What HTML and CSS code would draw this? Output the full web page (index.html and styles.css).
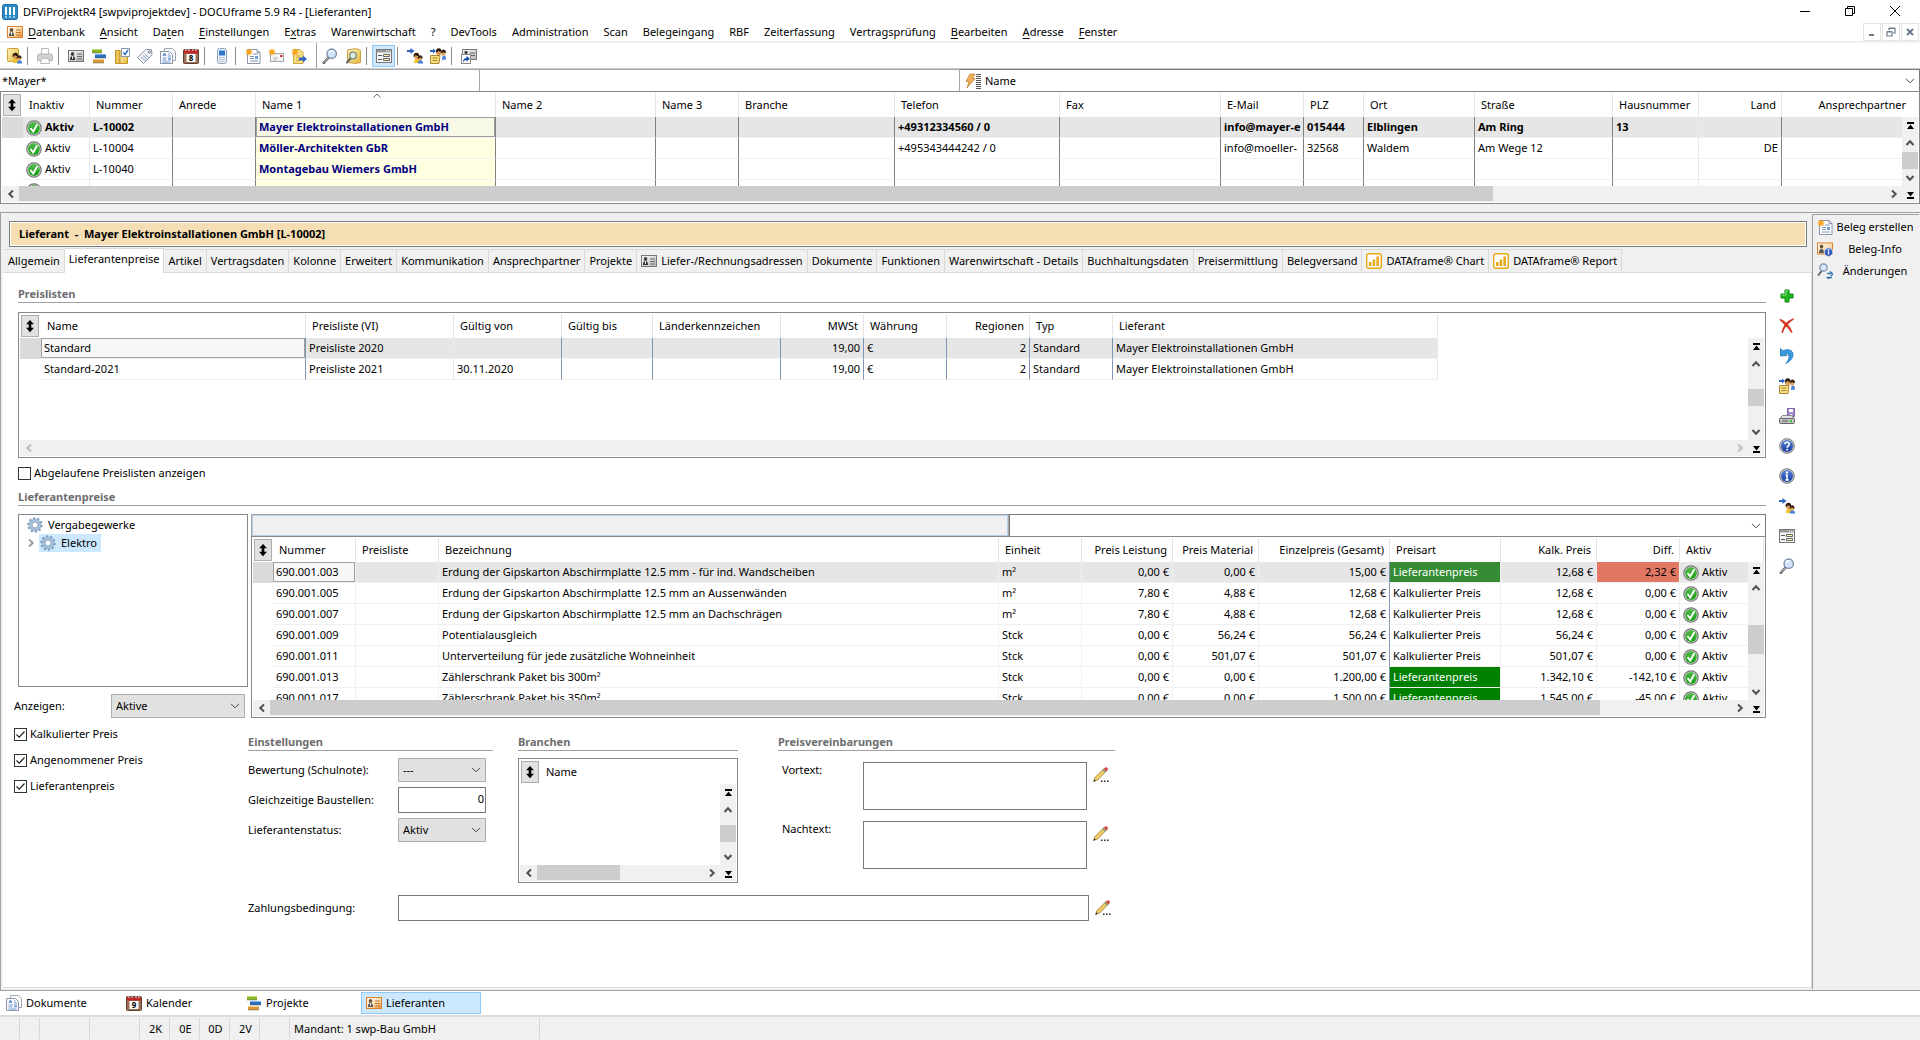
FILE: index.html
```html
<!DOCTYPE html>
<html lang="de">
<head>
    <meta charset="utf-8">
    <title>DFViProjektR4 [swpviprojektdev] - DOCUframe 5.9 R4 - [Lieferanten]</title>
    <link rel="stylesheet" href="styles.css">
</head>
<body>
    <!-- icon sprite -->
    <svg class="sprite" aria-hidden="true">
        <defs>
            <linearGradient id="g-orange" x1="0" y1="0" x2="1" y2="1"><stop offset="0" stop-color="#fff"/><stop offset=".6" stop-color="#fbd9a8"/><stop offset="1" stop-color="#ef8a2c"/></linearGradient>
            <linearGradient id="g-gray" x1="0" y1="0" x2="1" y2="1"><stop offset="0" stop-color="#fff"/><stop offset="1" stop-color="#b4b4b4"/></linearGradient>
            <linearGradient id="g-green" x1="0" y1="0" x2="0" y2="1"><stop offset="0" stop-color="#56b84e"/><stop offset="1" stop-color="#16a012"/></linearGradient>
            <linearGradient id="g-blue" x1="0" y1="0" x2="0" y2="1"><stop offset="0" stop-color="#5b85dd"/><stop offset="1" stop-color="#123a9e"/></linearGradient>
            <linearGradient id="g-yellow" x1="0" y1="0" x2="1" y2="1"><stop offset="0" stop-color="#fff3b8"/><stop offset="1" stop-color="#e6b93c"/></linearGradient>
            <g id="two-people">
                <path d="M7 15c0-3 1-4.500 3-4.500s3.500 1.500 3.500 4.500z" fill="#f0c030"/>
                <path d="M11 15.500c0-2 .7-3.500 2.300-3.500s2.700 1.200 2.700 3.500z" fill="#3b7fe0"/>
                <circle cx="9.500" cy="8.500" r="2.500" fill="#d99a5b"/>
                <path d="M6.600 9c-.3-3 1-4.200 2.900-4.200S12.300 6 12 8c-1.500.2-2.500-.4-3.500-1-.4 1-.9 1.700-1.900 2z" fill="#2a1a10"/>
                <circle cx="13" cy="10.800" r="2.100" fill="#e0a468"/>
                <path d="M10.700 10.800c-.2-2.300.8-3.600 2.400-3.600s2.800 1.300 2.500 3.400c-1 0-2-.4-2.600-1-.5.700-1.300 1.200-2.300 1.200z" fill="#3a2414"/>
            </g>
            <path id="star" d="M4 0l.9 2.200L7 1.200 6.100 3.300 8 4l-1.900.8L7 7 4.900 6.100 4 8l-.9-1.900L1 7l.9-2.200L0 4l1.900-.7L1 1.200l2.100 1z" fill="#f7a823"/>
        </defs>
        <symbol id="i-app" viewBox="0 0 16 16"><rect x=".5" y=".5" width="15" height="15" rx="2" fill="#2a8ac8" stroke="#1d6ea8"/><path d="M4 3v8M8 3v8M12 3v8" stroke="#fff" stroke-width="2"/><path d="M3 13h2M7 13h2M11 13h2" stroke="#fff" stroke-width="1"/></symbol>
        <symbol id="i-card" viewBox="0 0 16 16"><rect x=".5" y="2.500" width="15" height="11" fill="url(#g-orange)" stroke="#d9822b"/><ellipse cx="4.500" cy="6" rx="1.800" ry="2" fill="#6b5536"/><path d="M2 12c0-3 1-4 2.500-4S7 9 7 12z" fill="#555"/><path d="M4.500 8v3" stroke="#eee" stroke-width="1"/><path d="M9 6h5M9 8.500h5M9 11h5" stroke="#c27430" stroke-width="1"/></symbol>
        <symbol id="i-card-gray" viewBox="0 0 16 16"><rect x=".5" y="2.500" width="15" height="11" fill="url(#g-gray)" stroke="#777"/><ellipse cx="4.500" cy="6" rx="1.800" ry="2" fill="#444"/><path d="M2 12c0-3 1-4 2.500-4S7 9 7 12z" fill="#333"/><path d="M4.500 8v3" stroke="#eee" stroke-width="1"/><path d="M9 6h5M9 8.500h5M9 11h5" stroke="#666" stroke-width="1"/></symbol>
        <symbol id="i-folder-people" viewBox="0 0 16 16"><rect x="1.500" y=".5" width="11" height="13" rx="1" fill="url(#g-yellow)" stroke="#d0a23a"/><use href="#two-people"/></symbol>
        <symbol id="i-printer" viewBox="0 0 16 16"><path d="M4.500 6V.5h7V6" fill="#fff" stroke="#bbb"/><path d="M.5 12.500V8c0-1.500.5-2 2-2h11c1.500 0 2 .5 2 2v4.500z" fill="#d2d2d2" stroke="#b5b5b5"/><path d="M3.500 15.500l1-5h7l1 5z" fill="#fafafa" stroke="#bbb"/></symbol>
        <symbol id="i-bars" viewBox="0 0 16 16"><path d="M1 1h10v4H1z" fill="#8ab82a"/><path d="M4 6h11v4H4z" fill="#2a6fc0"/><path d="M2 11h11v4H2z" fill="#d99a3a"/><path d="M1 1.500h10" stroke="#c4e070"/><path d="M4 6.500h11" stroke="#7ab2ea"/><path d="M2 11.500h11" stroke="#f2c98a"/><path d="M1 5h10M4 10h11M2 15h11" stroke="#444" stroke-opacity=".4"/></symbol>
        <symbol id="i-folder-check" viewBox="0 0 16 16"><path d="M1.500 2.500H6v13H1.500z" fill="#e8c35a" stroke="#c4952a"/><path d="M6 3.500h7.500v12H6z" fill="url(#g-yellow)" stroke="#c4952a"/><rect x="7.500" y=".5" width="8" height="8" fill="#fff" stroke="#8a9ab5"/><path d="M9.300 4.500l1.700 2 3-4.500" fill="none" stroke="#2a6fc0" stroke-width="1.500"/></symbol>
        <symbol id="i-tag" viewBox="0 0 16 16"><path d="M9 1.500l5.500 0 .5 5.500-8.500 8.500-6-6z" fill="#f4f6fa" stroke="#8a94a3"/><circle cx="12.300" cy="4" r="1.200" fill="#fff" stroke="#777"/><path d="M4 9l4.500 4M5.700 7.300l4.300 4M7.500 5.800l4 3.700" stroke="#7d93b8"/></symbol>
        <symbol id="i-docs" viewBox="0 0 16 16"><path d="M4.500.5h8l3 3v9h-11z" fill="#fff" stroke="#9aa5b5"/><path d="M.5 3.500h9l3 3v9H.5z" fill="#fbfcff" stroke="#8a96a8"/><path d="M3 8l1.500-3L6 8M3.500 7h2" stroke="#4a78c4" fill="none"/><path d="M8 8h3M2.500 10h4M2.500 12h4M2.500 14h8M8 6h1.500" stroke="#6d93cc"/><path d="M8 9.500h3v3H8z" fill="#88aee0"/></symbol>
        <symbol id="i-calendar" viewBox="0 0 16 16"><rect x=".5" y="1.500" width="15" height="14" rx="1" fill="#9c7057" stroke="#5e4032"/><path d="M1 2h14v3.500H1z" fill="#bf2626"/><path d="M3 0v3M6 0v3M10 0v3M13 0v3" stroke="#eee"/><rect x="3.500" y="6" width="9" height="8" fill="#fff"/></symbol>
        <symbol id="i-phone" viewBox="0 0 16 16"><rect x="3.500" y=".5" width="9" height="15" rx="2" fill="#eef3fa" stroke="#8aa0bf"/><rect x="5" y="2.500" width="6" height="5" fill="#2f77d0"/><path d="M5.500 9.500h5M5.500 11.500h5M5.500 13.500h5" stroke="#8796ac" stroke-dasharray="1 1"/></symbol>
        <symbol id="i-newdoc" viewBox="0 0 16 16"><path d="M2.500 1.500H12l3 3v11H2.500z" fill="#fff" stroke="#8a96a8"/><path d="M12 1.500v3h3" fill="none" stroke="#8a96a8"/><path d="M8 6h5M5 8.500h4M5 10.500h4M5 13h8" stroke="#7f96b8"/><path d="M10 8h3v3h-3z" fill="#6f9ad6"/><use href="#star"/></symbol>
        <symbol id="i-newmail" viewBox="0 0 16 16"><rect x="2.500" y="5.500" width="13" height="8" fill="#f4f4f4" stroke="#a5a5a5"/><path d="M5 10h5M5 12h4" stroke="#b5b5b5"/><path d="M12 7h2.500v2H12z" fill="#d23b3b"/><use href="#star"/></symbol>
        <symbol id="i-docarrow" viewBox="0 0 16 16"><path d="M2.500 1.500H9l3 3v11H2.500z" fill="#f8e08a" stroke="#c9a53a"/><path d="M5 8h4M5 10h3M5 12.500h4" stroke="#c9a53a"/><path d="M8 9.500h4V7.500l4 3.500-4 3.500v-2H8z" fill="#2f63c4"/><use href="#star"/></symbol>
        <symbol id="i-magnifier" viewBox="0 0 16 16"><path d="M6.500 9.500L1.800 14.800" stroke="#666" stroke-width="2.600" stroke-linecap="round"/><path d="M6.300 9.700L2 14.500" stroke="#ccc" stroke-width="1"/><circle cx="9.700" cy="5.700" r="4.700" fill="#cfe4fa" stroke="#7f8ea8" stroke-width="1.400"/><path d="M7 4.500c.7-1.400 2-1.900 3.400-1.600" fill="none" stroke="#fff" stroke-width="1.500"/></symbol>
        <symbol id="i-bookfind" viewBox="0 0 16 16"><path d="M2.500 2l9-1.500 4 2v12l-4 1-9-1z" fill="url(#g-yellow)" stroke="#c9a04a"/><path d="M5.500 10.500L2 14.500" stroke="#666" stroke-width="2" stroke-linecap="round"/><circle cx="8" cy="7.500" r="3.300" fill="#d8ecdf" stroke="#7a8a80" stroke-width="1.300"/></symbol>
        <symbol id="i-form" viewBox="0 0 16 16"><rect x=".5" y="1.500" width="15" height="13" fill="#f5f5f5" stroke="#777"/><path d="M1 2h14v2.500H1z" fill="#9a9a9a"/><path d="M10 3h1M12 3h1M14 3h1" stroke="#fff"/><path d="M2 7.500h4M2 11.500h4" stroke="#555"/><path d="M7.500 6.500h6v2h-6zM7.500 10.500h6v2h-6z" fill="#fff7b0" stroke="#666"/></symbol>
        <symbol id="i-people" viewBox="0 0 16 16"><path d="M0 2h3.500V0L7.500 3 3.500 6V4H0z" fill="#2f63c4"/><use href="#two-people"/></symbol>
        <symbol id="i-peopledoc" viewBox="0 0 16 16"><path d="M0 2h3V.5L6 3 3 5.500V4H0z" fill="#2f63c4"/><path d="M12 12c0-3 .5-4.500 2-4.500s2 1.500 2 4z" fill="#4c86df"/><circle cx="8.700" cy="4.500" r="2.700" fill="#d99a5b"/><path d="M5.900 4.500C5.700 1.500 7 .2 8.800.2s3 1.300 2.700 3.600c-1.500.2-2.500-.4-3.300-1-.4 1-1.200 1.600-2.300 1.700z" fill="#2a1a10"/><circle cx="13.200" cy="5.500" r="2.200" fill="#e0a468"/><path d="M10.900 5.300C10.800 3 12 1.500 13.500 1.500s2.600 1.300 2.400 3.600c-1.200.1-2-.4-2.600-1-.5.700-1.400 1.200-2.400 1.200z" fill="#3a2414"/><path d="M.5 7.500H10L9 15.500H.5z" fill="#f5dd7c" stroke="#a88a38"/><path d="M2.500 10h5M2.500 12.500h5" stroke="#a88a38"/></symbol>
        <symbol id="i-shortcut" viewBox="0 0 16 16"><rect x="1.500" y="1.500" width="14" height="10" fill="url(#g-gray)" stroke="#777"/><ellipse cx="5" cy="4.500" rx="1.600" ry="1.800" fill="#444"/><path d="M9 5h5M9 7.500h5" stroke="#666"/><rect x=".5" y="6.500" width="9" height="9" fill="#fff" stroke="#888"/><path d="M2 14.500c0-3 1-4.500 3.500-4.500V7.800l3.300 3-3.300 3V12c-1.500 0-2.500.8-3.500 2.500z" fill="#1d4fa8"/></symbol>
        <symbol id="i-ok" viewBox="0 0 16 16"><circle cx="8" cy="8" r="7.200" fill="#ddd" stroke="#777" stroke-width="1.200"/><circle cx="8" cy="8" r="5.900" fill="url(#g-green)"/><path d="M4.500 8l2.700 3.500L11.300 4.200" fill="none" stroke="#fff" stroke-width="1.900"/></symbol>
        <symbol id="i-plus" viewBox="0 0 16 16"><path d="M6 2h4v4h4v4h-4v4H6v-4H2V6h4z" fill="#22b822" stroke="#0b8a0b"/><path d="M7 3h2M3 7h4V3" stroke="#86e886" fill="none"/></symbol>
        <symbol id="i-delete" viewBox="0 0 16 16"><path d="M1 1.500c5 2 9.500 7 12 13-5-7-8-9-12-13z" fill="#d8402c" stroke="#d8402c" stroke-width="1.400"/><path d="M14.500 1C8.500 4.500 5 9 3 15c1-5 4-11 11.500-14z" fill="#e2543c" stroke="#d0341f" stroke-width="1.400"/></symbol>
        <symbol id="i-undo" viewBox="0 0 16 16"><path d="M1.500.5v7.500l6.500-.5-2-2c2.500-.6 4 .8 4 3 0 2.500-1 4.500-3 7 4.500-2.500 7-5.500 7-9C14 2 8.500.2 4 3z" fill="#3a9be0" stroke="#1b6fb5" stroke-width=".8"/></symbol>
        <symbol id="i-save" viewBox="0 0 16 16"><path d="M8.500.5h7v8h-7z" fill="#a68ad0" stroke="#7d62a8"/><path d="M10 1h4v3h-4z" fill="#fff"/><path d="M11 6h2v2h-2z" fill="#e6dcf5"/><path d="M.5 11l3-3.500h9l3 3.500z" fill="#e2e2e2" stroke="#888"/><rect x=".5" y="10.500" width="15" height="5" rx="1" fill="#c4c4c4" stroke="#666"/><path d="M3 13h6" stroke="#555"/><path d="M11 12h2v2h-2z" fill="#2fc42f"/></symbol>
        <symbol id="i-help" viewBox="0 0 16 16"><circle cx="8" cy="8" r="7.300" fill="#ccc" stroke="#777"/><circle cx="8" cy="8" r="6" fill="url(#g-blue)"/><path d="M5.800 6.300C5.800 3.500 10.300 3.500 10.300 6.300c0 1.700-2.200 1.700-2.200 3.400" fill="none" stroke="#fff" stroke-width="1.600"/><circle cx="8.100" cy="11.800" r="1" fill="#fff"/></symbol>
        <symbol id="i-info" viewBox="0 0 16 16"><circle cx="8" cy="8" r="7.300" fill="#ccc" stroke="#777"/><circle cx="8" cy="8" r="6" fill="url(#g-blue)"/><circle cx="8" cy="4.500" r="1.200" fill="#fff"/><path d="M6.500 7H8v4.500M6.300 12h3.500" fill="none" stroke="#fff" stroke-width="1.600"/></symbol>
        <symbol id="i-cardinfo" viewBox="0 0 16 16"><rect x=".5" y="2" width="15" height="11" fill="url(#g-orange)" stroke="#d9822b"/><ellipse cx="4.500" cy="5.500" rx="1.800" ry="2" fill="#6b5536"/><path d="M2 12c0-3 1-4 2.500-4S7 9 7 12z" fill="#555"/><circle cx="11.500" cy="11" r="4.300" fill="url(#g-blue)" stroke="#dde"/><circle cx="11.500" cy="9" r=".8" fill="#fff"/><path d="M11.500 10.500v3" stroke="#fff" stroke-width="1.400"/></symbol>
        <symbol id="i-changes" viewBox="0 0 16 16"><path d="M5 7.500L1.500 12" stroke="#666" stroke-width="2" stroke-linecap="round"/><circle cx="6.500" cy="4.500" r="3.700" fill="#d6e8fb" stroke="#7f8ea8" stroke-width="1.300"/><path d="M10 10.500h3.500V9l2.500 2.200-2.500 1.800M15 14.500h-3V16l-2.500-2" fill="none" stroke="#3a74a8" stroke-width="1.300"/></symbol>
        <symbol id="i-pencil" viewBox="0 0 16 16"><path d="M.6 14.400L2 10.500 11.500 1 14 3.500 4.500 13z" fill="#f3cf62" stroke="#94763a" stroke-width=".8"/><path d="M10.500 2l2.500 2.500L15 2.500C15.300 1 14 0 12.500.2z" fill="#d05050"/><path d="M9.800 2.700l2.500 2.500" stroke="#7aa08a" stroke-width="1.500"/><path d="M.4 14.800l1-2.600 1.500 1.600z" fill="#333"/><path d="M8 13.500h1.500v1.500H8zM11 13.500h1.500v1.500H11zM14 13.500h1.500v1.500H14z" fill="#222"/></symbol>
        <symbol id="i-gear" viewBox="0 0 16 16"><circle cx="8" cy="8" r="6.700" fill="none" stroke="#7d9bb8" stroke-width="2" stroke-dasharray="2.200 2"/><circle cx="8" cy="8" r="4.600" fill="#fff" stroke="#a5c0da" stroke-width="2.800"/><circle cx="8" cy="8" r="5.900" fill="none" stroke="#8aa6c2" stroke-width=".7"/><circle cx="8" cy="8" r="3" fill="none" stroke="#7390ad" stroke-width=".8"/></symbol>
        <symbol id="i-chart" viewBox="0 0 16 16"><rect x=".7" y=".7" width="14.600" height="14.600" rx="2" fill="#fff" stroke="#e8a912" stroke-width="1.400"/><path d="M3 9h2.500v4H3zM6.700 6.500h2.500V13H6.700zM10.400 3.500h2.500V13h-2.500z" fill="#e8a912"/></symbol>
        <symbol id="i-flash" viewBox="0 0 16 16"><path d="M5 1h5L7.500 5.500H10L2 15l2-6.500H1z" fill="#f2b25c" stroke="#b8782f" stroke-width=".7"/><path d="M11 1.500h5M11 3.500h5M11 5.500h5M11 7.500h5M11 9.500h5M11 11.500h5M11 13.500h5M11 15.500h5" stroke="#555" stroke-width="1"/></symbol>
        <symbol id="i-sort" viewBox="0 0 16 16"><path d="M8 1l4.500 5H9.500v4h3L8 15l-4.500-5h3V6h-3z" fill="#000"/></symbol>
        <symbol id="i-up" viewBox="0 0 16 16"><path d="M4.500 10L8 6.300l3.500 3.700" fill="none" stroke="#505050" stroke-width="2"/></symbol>
        <symbol id="i-down" viewBox="0 0 16 16"><path d="M4.500 6L8 9.700 11.500 6" fill="none" stroke="#505050" stroke-width="2"/></symbol>
        <symbol id="i-left" viewBox="0 0 16 16"><path d="M10 4.500L6.300 8l3.700 3.500" fill="none" stroke="currentColor" stroke-width="2"/></symbol>
        <symbol id="i-right" viewBox="0 0 16 16"><path d="M6 4.500L9.700 8 6 11.500" fill="none" stroke="currentColor" stroke-width="2"/></symbol>
        <symbol id="i-top" viewBox="0 0 16 16"><path d="M5 4h7v2H5zM8.500 6.500L12 11H5z" fill="#000"/></symbol>
        <symbol id="i-bottom" viewBox="0 0 16 16"><path d="M5 11h7v2H5zM8.500 10.500L12 6H5z" fill="#000"/></symbol>
    </svg>

    <header class="titlebar">
        <svg class="icon"><use href="#i-app"/></svg>
        <span class="title-text">DFViProjektR4 [swpviprojektdev] - DOCUframe 5.9 R4 - [Lieferanten]</span>
        <button class="win-btn" aria-label="Minimieren"><svg viewBox="0 0 10 10"><path d="M0 5.500h10"/></svg></button>
        <button class="win-btn" aria-label="Wiederherstellen"><svg viewBox="0 0 10 10"><path d="M.5 2.500h7v7h-7zM2.500 2.500v-2h7v7h-2"/></svg></button>
        <button class="win-btn" aria-label="Schließen"><svg viewBox="0 0 10 10"><path d="M0 0l10 10M10 0L0 10"/></svg></button>
    </header>

    <nav class="menubar">
        <svg class="icon"><use href="#i-card"/></svg>
        <a href="#"><u>D</u>atenbank</a>
        <a href="#"><u>A</u>nsicht</a>
        <a href="#">Da<u>t</u>en</a>
        <a href="#"><u>E</u>instellungen</a>
        <a href="#">E<u>x</u>tras</a>
        <a href="#">Warenwirtschaft</a>
        <a href="#">?</a>
        <a href="#">DevTools</a>
        <a href="#">Administration</a>
        <a href="#">Scan</a>
        <a href="#">Belegeingang</a>
        <a href="#">RBF</a>
        <a href="#">Zeiterfassung</a>
        <a href="#">Vertragsprüfung</a>
        <a href="#"><u>B</u>earbeiten</a>
        <a href="#"><u>A</u>dresse</a>
        <a href="#"><u>F</u>enster</a>
        <div class="mdi-buttons">
            <button aria-label="Fenster minimieren"><svg viewBox="0 0 10 10"><path d="M2 8h5" stroke-width="2"/></svg></button>
            <button aria-label="Fenster wiederherstellen"><svg viewBox="0 0 10 10"><path d="M1 5h5v4H1zM1 4.500h5M3 3V1.500h6V6H7M3 1h6" stroke-width="1.200"/></svg></button>
            <button aria-label="Fenster schließen"><svg viewBox="0 0 10 10"><path d="M2 2l6 6M8 2L2 8" stroke-width="2"/></svg></button>
        </div>
    </nav>

    <div class="toolbar">
        <button aria-label="Adressen"><svg class="icon"><use href="#i-folder-people"/></svg></button>
        <span class="sep"></span>
        <button aria-label="Drucken"><svg class="icon"><use href="#i-printer"/></svg></button>
        <span class="sep"></span>
        <button aria-label="Karte"><svg class="icon"><use href="#i-card-gray"/></svg></button>
        <button aria-label="Projekte"><svg class="icon"><use href="#i-bars"/></svg></button>
        <button aria-label="Aufgaben"><svg class="icon"><use href="#i-folder-check"/></svg></button>
        <button aria-label="Artikel"><svg class="icon"><use href="#i-tag"/></svg></button>
        <button aria-label="Dokumente"><svg class="icon"><use href="#i-docs"/></svg></button>
        <button aria-label="Kalender"><svg class="icon" viewBox="0 0 16 16"><use href="#i-calendar"/><text class="day" x="8" y="13">8</text></svg></button>
        <span class="sep"></span>
        <button aria-label="Telefon"><svg class="icon"><use href="#i-phone"/></svg></button>
        <span class="sep"></span>
        <button aria-label="Neues Dokument"><svg class="icon"><use href="#i-newdoc"/></svg></button>
        <button aria-label="Neue E-Mail"><svg class="icon"><use href="#i-newmail"/></svg></button>
        <button aria-label="Neue Notiz"><svg class="icon"><use href="#i-docarrow"/></svg></button>
        <span class="sep tall"></span>
        <button aria-label="Suchen"><svg class="icon"><use href="#i-magnifier"/></svg></button>
        <button aria-label="Katalog durchsuchen"><svg class="icon"><use href="#i-bookfind"/></svg></button>
        <span class="sep"></span>
        <button class="on" aria-label="Formular"><svg class="icon"><use href="#i-form"/></svg></button>
        <span class="sep"></span>
        <button aria-label="Zu Kontakten"><svg class="icon"><use href="#i-people"/></svg></button>
        <button aria-label="Zu Kontaktnotizen"><svg class="icon"><use href="#i-peopledoc"/></svg></button>
        <span class="sep"></span>
        <button aria-label="Verknüpfung"><svg class="icon"><use href="#i-shortcut"/></svg></button>
    </div>

    <div class="searchbar">
        <input type="text" value="*Mayer*" aria-label="Suchbegriff">
        <input type="text" aria-label="Suchbegriff 2">
        <div class="search-field">
            <svg class="icon"><use href="#i-flash"/></svg>
            <select aria-label="Suchfeld"><option>Name</option></select>
        </div>
    </div>

    <div class="gridbox addresses">
        <div class="gridbox-data">
            <table class="data dark">
                <colgroup>
                    <col class="w21"><col class="w67"><col class="w83"><col class="w83"><col class="w240"><col class="w160"><col class="w83"><col class="w156"><col class="w165"><col class="w161"><col class="w83"><col class="w60"><col class="w111"><col class="w138"><col class="w86"><col class="w83"><col>
                </colgroup>
                <thead>
                    <tr>
                        <th><button class="sort" aria-label="Sortieren"><svg><use href="#i-sort"/></svg></button></th>
                        <th>Inaktiv</th><th>Nummer</th><th>Anrede</th>
                        <th class="sorted">Name 1<svg class="caret" viewBox="0 0 8 5"><path d="M.5 4.500L4 1l3.500 3.500"/></svg></th>
                        <th>Name 2</th><th>Name 3</th><th>Branche</th><th>Telefon</th><th>Fax</th><th>E-Mail</th><th>PLZ</th><th>Ort</th><th>Straße</th><th>Hausnummer</th><th class="num">Land</th><th class="num last">Ansprechpartner</th>
                    </tr>
                </thead>
                <tbody>
                    <tr class="selected bold">
                        <td></td><td class="lt"><svg class="icon"><use href="#i-ok"/></svg>Aktiv</td><td>L-10002</td><td></td><td class="name focus">Mayer Elektroinstallationen GmbH</td><td></td><td></td><td></td><td>+49312334560 / 0</td><td></td><td>info@mayer-e</td><td>015444</td><td>Elblingen</td><td>Am Ring</td><td class="lt">13</td><td class="num"></td><td></td>
                    </tr>
                    <tr>
                        <td></td><td class="lt"><svg class="icon"><use href="#i-ok"/></svg>Aktiv</td><td>L-10004</td><td></td><td class="name">Möller-Architekten GbR</td><td></td><td></td><td></td><td>+495343444242 / 0</td><td></td><td>info@moeller-</td><td>32568</td><td>Waldem</td><td>Am Wege 12</td><td class="lt"></td><td class="num">DE</td><td></td>
                    </tr>
                    <tr>
                        <td></td><td class="lt"><svg class="icon"><use href="#i-ok"/></svg>Aktiv</td><td>L-10040</td><td></td><td class="name">Montagebau Wiemers GmbH</td><td></td><td></td><td></td><td></td><td></td><td></td><td></td><td></td><td></td><td class="lt"></td><td></td><td></td>
                    </tr>
                    <tr>
                        <td></td><td class="lt"><svg class="icon"><use href="#i-ok"/></svg></td><td></td><td></td><td class="name"></td><td></td><td></td><td></td><td></td><td></td><td></td><td></td><td></td><td></td><td class="lt"></td><td></td><td></td>
                    </tr>
                </tbody>
            </table>
        </div>
        <div class="vscroll">
            <button aria-label="Zum Anfang"><svg><use href="#i-top"/></svg></button>
            <button aria-label="Nach oben"><svg><use href="#i-up"/></svg></button>
            <div class="track"><div class="thumb"></div></div>
            <button aria-label="Nach unten"><svg><use href="#i-down"/></svg></button>
        </div>
        <div class="hscroll">
            <button aria-label="Nach links"><svg><use href="#i-left"/></svg></button>
            <div class="track"><div class="thumb" style="width: 79%"></div></div>
            <button aria-label="Nach rechts"><svg><use href="#i-right"/></svg></button>
        </div>
        <button class="to-end" aria-label="Zum Ende"><svg><use href="#i-bottom"/></svg></button>
    </div>

    <div class="workspace">
        <main class="record">
            <h1 class="record-title">Lieferant&nbsp; -&nbsp; Mayer Elektroinstallationen GmbH [L-10002]</h1>

            <div class="tabs" role="tablist">
                <button role="tab">Allgemein</button>
                <button role="tab" class="active" aria-selected="true">Lieferantenpreise</button>
                <button role="tab">Artikel</button>
                <button role="tab">Vertragsdaten</button>
                <button role="tab">Kolonne</button>
                <button role="tab">Erweitert</button>
                <button role="tab">Kommunikation</button>
                <button role="tab">Ansprechpartner</button>
                <button role="tab">Projekte</button>
                <button role="tab"><svg class="icon"><use href="#i-card-gray"/></svg>Liefer-/Rechnungsadressen</button>
                <button role="tab">Dokumente</button>
                <button role="tab">Funktionen</button>
                <button role="tab">Warenwirtschaft - Details</button>
                <button role="tab">Buchhaltungsdaten</button>
                <button role="tab">Preisermittlung</button>
                <button role="tab">Belegversand</button>
                <button role="tab"><svg class="icon"><use href="#i-chart"/></svg>DATAframe® Chart</button>
                <button role="tab"><svg class="icon"><use href="#i-chart"/></svg>DATAframe® Report</button>
            </div>

            <div class="tab-pane">
                <div class="pane-content">
                    <section class="pricelists">
                        <h2>Preislisten</h2>
                        <div class="gridbox">
                            <div class="gridbox-data">
                                <table class="data blue lists">
                                    <colgroup>
                                        <col class="w21"><col class="w265"><col class="w148"><col class="w108"><col class="w91"><col class="w128"><col class="w83"><col class="w83"><col class="w83"><col class="w83"><col>
                                    </colgroup>
                                    <thead>
                                        <tr>
                                            <th><button class="sort" aria-label="Sortieren"><svg><use href="#i-sort"/></svg></button></th>
                                            <th>Name</th><th>Preisliste (VI)</th><th>Gültig von</th><th>Gültig bis</th><th>Länderkennzeichen</th><th class="num">MWSt</th><th>Währung</th><th class="num">Regionen</th><th>Typ</th><th>Lieferant</th>
                                        </tr>
                                    </thead>
                                    <tbody>
                                        <tr class="selected">
                                            <td></td><td class="focus">Standard</td><td class="lt">Preisliste 2020</td><td></td><td></td><td></td><td class="num">19,00</td><td>€</td><td class="num">2</td><td class="lt">Standard</td><td class="lt">Mayer Elektroinstallationen GmbH</td>
                                        </tr>
                                        <tr>
                                            <td></td><td>Standard-2021</td><td class="lt">Preisliste 2021</td><td>30.11.2020</td><td></td><td></td><td class="num">19,00</td><td>€</td><td class="num">2</td><td class="lt">Standard</td><td class="lt">Mayer Elektroinstallationen GmbH</td>
                                        </tr>
                                    </tbody>
                                </table>
                            </div>
                            <div class="vscroll">
                                <button aria-label="Zum Anfang"><svg><use href="#i-top"/></svg></button>
                                <button aria-label="Nach oben"><svg><use href="#i-up"/></svg></button>
                                <div class="track"><div class="thumb"></div></div>
                                <button aria-label="Nach unten"><svg><use href="#i-down"/></svg></button>
                            </div>
                            <div class="hscroll">
                                <button disabled aria-label="Nach links"><svg><use href="#i-left"/></svg></button>
                                <div class="track"></div>
                                <button disabled aria-label="Nach rechts"><svg><use href="#i-right"/></svg></button>
                            </div>
                            <button class="to-end" aria-label="Zum Ende"><svg><use href="#i-bottom"/></svg></button>
                        </div>
                        <label class="check"><input type="checkbox">Abgelaufene Preislisten anzeigen</label>
                        <h2>Lieferantenpreise</h2>
                    </section>

                    <div class="prices">
                        <aside class="filter">
                            <ul class="tree">
                                <li><svg class="icon"><use href="#i-gear"/></svg>Vergabegewerke</li>
                                <li class="child"><svg class="expander"><use href="#i-right"/></svg><span class="current"><svg class="icon"><use href="#i-gear"/></svg>Elektro</span></li>
                            </ul>
                            <div class="show-row">
                                <label for="show">Anzeigen:</label>
                                <select id="show" class="combo"><option>Aktive</option></select>
                            </div>
                            <label class="check"><input type="checkbox" checked>Kalkulierter Preis</label>
                            <label class="check"><input type="checkbox" checked>Angenommener Preis</label>
                            <label class="check"><input type="checkbox" checked>Lieferantenpreis</label>
                        </aside>

                        <div class="price-main">
                            <div class="price-search">
                                <input type="text" aria-label="Preis suchen">
                                <select aria-label="Preis-Suchfeld"><option></option></select>
                            </div>
                            <div class="gridbox price-grid">
                                <div class="gridbox-data">
                                    <table class="data">
                                        <colgroup>
                                            <col class="w20"><col class="w83"><col class="w83"><col><col class="w83"><col class="w91"><col class="w86"><col class="w131"><col class="w111"><col class="w96"><col class="w83"><col class="w84">
                                        </colgroup>
                                        <thead>
                                            <tr>
                                                <th><button class="sort" aria-label="Sortieren"><svg><use href="#i-sort"/></svg></button></th>
                                                <th>Nummer</th><th>Preisliste</th><th>Bezeichnung</th><th>Einheit</th><th class="num">Preis Leistung</th><th class="num">Preis Material</th><th class="num">Einzelpreis (Gesamt)</th><th>Preisart</th><th class="num">Kalk. Preis</th><th class="num">Diff.</th><th>Aktiv</th>
                                            </tr>
                                        </thead>
                                        <tbody>
                                            <tr class="selected">
                                                <td></td><td class="focus">690.001.003</td><td></td><td>Erdung der Gipskarton Abschirmplatte 12.5 mm - für ind. Wandscheiben</td><td>m²</td><td class="num">0,00 €</td><td class="num">0,00 €</td><td class="num mark">15,00 €</td><td class="supplier">Lieferantenpreis</td><td class="num">12,68 €</td><td class="num over">2,32 €</td><td><svg class="icon"><use href="#i-ok"/></svg>Aktiv</td>
                                            </tr>
                                            <tr>
                                                <td></td><td>690.001.005</td><td></td><td>Erdung der Gipskarton Abschirmplatte 12.5 mm an Aussenwänden</td><td>m²</td><td class="num">7,80 €</td><td class="num">4,88 €</td><td class="num mark">12,68 €</td><td>Kalkulierter Preis</td><td class="num">12,68 €</td><td class="num">0,00 €</td><td><svg class="icon"><use href="#i-ok"/></svg>Aktiv</td>
                                            </tr>
                                            <tr>
                                                <td></td><td>690.001.007</td><td></td><td>Erdung der Gipskarton Abschirmplatte 12.5 mm an Dachschrägen</td><td>m²</td><td class="num">7,80 €</td><td class="num">4,88 €</td><td class="num mark">12,68 €</td><td>Kalkulierter Preis</td><td class="num">12,68 €</td><td class="num">0,00 €</td><td><svg class="icon"><use href="#i-ok"/></svg>Aktiv</td>
                                            </tr>
                                            <tr>
                                                <td></td><td>690.001.009</td><td></td><td>Potentialausgleich</td><td>Stck</td><td class="num">0,00 €</td><td class="num">56,24 €</td><td class="num mark">56,24 €</td><td>Kalkulierter Preis</td><td class="num">56,24 €</td><td class="num">0,00 €</td><td><svg class="icon"><use href="#i-ok"/></svg>Aktiv</td>
                                            </tr>
                                            <tr>
                                                <td></td><td>690.001.011</td><td></td><td>Unterverteilung für jede zusätzliche Wohneinheit</td><td>Stck</td><td class="num">0,00 €</td><td class="num">501,07 €</td><td class="num mark">501,07 €</td><td>Kalkulierter Preis</td><td class="num">501,07 €</td><td class="num">0,00 €</td><td><svg class="icon"><use href="#i-ok"/></svg>Aktiv</td>
                                            </tr>
                                            <tr>
                                                <td></td><td>690.001.013</td><td></td><td>Zählerschrank Paket bis 300m²</td><td>Stck</td><td class="num">0,00 €</td><td class="num">0,00 €</td><td class="num mark">1.200,00 €</td><td class="supplier">Lieferantenpreis</td><td class="num">1.342,10 €</td><td class="num">-142,10 €</td><td><svg class="icon"><use href="#i-ok"/></svg>Aktiv</td>
                                            </tr>
                                            <tr>
                                                <td></td><td>690.001.017</td><td></td><td>Zählerschrank Paket bis 350m²</td><td>Stck</td><td class="num">0,00 €</td><td class="num">0,00 €</td><td class="num mark">1.500,00 €</td><td class="supplier">Lieferantenpreis</td><td class="num">1.545,00 €</td><td class="num">-45,00 €</td><td><svg class="icon"><use href="#i-ok"/></svg>Aktiv</td>
                                            </tr>
                                        </tbody>
                                    </table>
                                </div>
                                <div class="vscroll">
                                    <button aria-label="Zum Anfang"><svg><use href="#i-top"/></svg></button>
                                    <button aria-label="Nach oben"><svg><use href="#i-up"/></svg></button>
                                    <div class="track"><div class="thumb"></div></div>
                                    <button aria-label="Nach unten"><svg><use href="#i-down"/></svg></button>
                                </div>
                                <div class="hscroll">
                                    <button aria-label="Nach links"><svg><use href="#i-left"/></svg></button>
                                    <div class="track"><div class="thumb" style="width: 91%"></div></div>
                                    <button aria-label="Nach rechts"><svg><use href="#i-right"/></svg></button>
                                </div>
                                <button class="to-end" aria-label="Zum Ende"><svg><use href="#i-bottom"/></svg></button>
                            </div>

                            <div class="groups">
                                <section class="settings">
                                    <h2>Einstellungen</h2>
                                    <div class="form-row">
                                        <label for="rating">Bewertung (Schulnote):</label>
                                        <select id="rating" class="combo"><option>---</option></select>
                                    </div>
                                    <div class="form-row">
                                        <label for="sites">Gleichzeitige Baustellen:</label>
                                        <input id="sites" type="text" value="0">
                                    </div>
                                    <div class="form-row">
                                        <label for="status">Lieferantenstatus:</label>
                                        <select id="status" class="combo"><option>Aktiv</option></select>
                                    </div>
                                </section>

                                <section class="branches">
                                    <h2>Branchen</h2>
                                    <div class="gridbox">
                                        <div class="gridbox-data">
                                            <table class="data">
                                                <colgroup><col class="w20"><col></colgroup>
                                                <thead>
                                                    <tr><th><button class="sort" aria-label="Sortieren"><svg><use href="#i-sort"/></svg></button></th><th class="only">Name</th></tr>
                                                </thead>
                                            </table>
                                        </div>
                                        <div class="vscroll">
                                            <button aria-label="Zum Anfang"><svg><use href="#i-top"/></svg></button>
                                            <button aria-label="Nach oben"><svg><use href="#i-up"/></svg></button>
                                            <div class="track"><div class="thumb"></div></div>
                                            <button aria-label="Nach unten"><svg><use href="#i-down"/></svg></button>
                                        </div>
                                        <div class="hscroll">
                                            <button aria-label="Nach links"><svg><use href="#i-left"/></svg></button>
                                            <div class="track"><div class="thumb" style="width: 50%"></div></div>
                                            <button aria-label="Nach rechts"><svg><use href="#i-right"/></svg></button>
                                        </div>
                                        <button class="to-end" aria-label="Zum Ende"><svg><use href="#i-bottom"/></svg></button>
                                    </div>
                                </section>

                                <section class="agreements">
                                    <h2>Preisvereinbarungen</h2>
                                    <div class="text-row">
                                        <label for="pretext">Vortext:</label>
                                        <textarea id="pretext"></textarea>
                                        <button class="edit" aria-label="Vortext bearbeiten"><svg class="icon"><use href="#i-pencil"/></svg></button>
                                    </div>
                                    <div class="text-row">
                                        <label for="posttext">Nachtext:</label>
                                        <textarea id="posttext"></textarea>
                                        <button class="edit" aria-label="Nachtext bearbeiten"><svg class="icon"><use href="#i-pencil"/></svg></button>
                                    </div>
                                </section>
                            </div>

                            <div class="payment">
                                <label for="terms">Zahlungsbedingung:</label>
                                <input id="terms" type="text">
                                <button class="edit" aria-label="Zahlungsbedingung bearbeiten"><svg class="icon"><use href="#i-pencil"/></svg></button>
                            </div>
                        </div>
                    </div>
                </div>

                <div class="actions">
                    <button aria-label="Neu"><svg class="icon"><use href="#i-plus"/></svg></button>
                    <button aria-label="Löschen"><svg class="icon"><use href="#i-delete"/></svg></button>
                    <button aria-label="Rückgängig"><svg class="icon"><use href="#i-undo"/></svg></button>
                    <button aria-label="Kontaktnotiz"><svg class="icon"><use href="#i-peopledoc"/></svg></button>
                    <button aria-label="Speichern"><svg class="icon"><use href="#i-save"/></svg></button>
                    <button aria-label="Hilfe"><svg class="icon"><use href="#i-help"/></svg></button>
                    <button aria-label="Info"><svg class="icon"><use href="#i-info"/></svg></button>
                    <button aria-label="Kontakte"><svg class="icon"><use href="#i-people"/></svg></button>
                    <button aria-label="Formularansicht"><svg class="icon"><use href="#i-form"/></svg></button>
                    <button aria-label="Suche"><svg class="icon"><use href="#i-magnifier"/></svg></button>
                </div>
            </div>
        </main>

        <aside class="sidebar">
            <button><svg class="icon"><use href="#i-newdoc"/></svg><span>Beleg erstellen</span></button>
            <button><svg class="icon"><use href="#i-cardinfo"/></svg><span>Beleg-Info</span></button>
            <button><svg class="icon"><use href="#i-changes"/></svg><span>Änderungen</span></button>
        </aside>
    </div>

    <nav class="windows">
        <button><svg class="icon"><use href="#i-docs"/></svg>Dokumente</button>
        <button><svg class="icon" viewBox="0 0 16 16"><use href="#i-calendar"/><text class="day" x="8" y="13">9</text></svg>Kalender</button>
        <button><svg class="icon"><use href="#i-bars"/></svg>Projekte</button>
        <button class="on"><svg class="icon"><use href="#i-card"/></svg>Lieferanten</button>
    </nav>

    <footer class="statusbar">
        <span class="s20"></span><span class="s20"></span><span class="s50"></span><span class="s50"></span>
        <span class="s30">2K</span><span class="s30">0E</span><span class="s30">0D</span><span class="s30">2V</span><span class="s30"></span>
        <span class="client">Mandant: 1 swp-Bau GmbH</span>
    </footer>
</body>
</html>
```
FILE: styles.css
```css
* {
    box-sizing: border-box;
}

body {
    margin: 0;
    height: 100vh;
    display: flex;
    flex-direction: column;
    overflow: hidden;
    background: #fff;
    color: #000;
    font: 11px/16px "Noto Sans", "Open Sans", sans-serif;
    white-space: nowrap;
}

button, input, select, textarea {
    font: inherit;
    color: inherit;
    margin: 0;
    padding: 0;
    border: none;
    border-radius: 0;
    background: none;
    outline: none;
}

button {
    display: flex;
    align-items: center;
    justify-content: center;
}

select {
    appearance: none;
    background: url("data:image/svg+xml,%3Csvg xmlns='http://www.w3.org/2000/svg' viewBox='0 0 10 6'%3E%3Cpath d='M1 .8l4 4 4-4' fill='none' stroke='%23444'/%3E%3C/svg%3E") no-repeat right 4px center / 10px 6px;
}

a {
    color: inherit;
    text-decoration: none;
}

u {
    text-underline-offset: 2px;
}

.sprite {
    position: absolute;
    width: 0;
    height: 0;
}

.icon {
    width: 16px;
    height: 16px;
    flex: none;
}

.day {
    font: bold 8px "Noto Sans", sans-serif;
    text-anchor: middle;
}

/* title and menu */
.titlebar {
    height: 23px;
    flex: none;
    display: flex;
    align-items: center;
    padding: 0 3px 0 2px;
}

.title-text {
    flex: 1;
    padding-left: 5px;
}

.win-btn {
    width: 45px;
    height: 20px;
    margin-bottom: 2px;
}

.win-btn svg {
    width: 10px;
    height: 10px;
    fill: none;
    stroke: #000;
}

.menubar {
    height: 20px;
    flex: none;
    display: flex;
    align-items: center;
    gap: 15px;
    padding-left: 7px;
    border-bottom: 2px solid #f0f0f0;
}

.menubar .icon {
    margin-right: -10px;
}

.mdi-buttons {
    display: flex;
    gap: 1px;
    margin-left: auto;
    padding-right: 1px;
}

.mdi-buttons button {
    width: 18px;
    height: 18px;
    border: 1px solid #e3e3e3;
}

.mdi-buttons svg {
    width: 10px;
    height: 10px;
    fill: none;
    stroke: #6c7a8c;
}

/* toolbar */
.toolbar {
    height: 26px;
    flex: none;
    display: flex;
    align-items: center;
    padding-left: 2px;
    border-bottom: 1px solid #c8c8c8;
}

.toolbar button {
    width: 23px;
    height: 22px;
}

.toolbar .on {
    background: #cce8ff;
    border: 1px solid #90c8f6;
}

.sep {
    width: 1px;
    height: 18px;
    margin: 0 5px 0 2px;
    background: #8c8c8c;
}

.sep.tall {
    height: 25px;
    margin: 0 1px 0 6px;
    background: #a0a0a0;
}

/* search row */
.searchbar {
    height: 22px;
    flex: none;
    display: grid;
    grid-template-columns: 1fr 1fr 2fr;
}

.searchbar input,
.search-field {
    min-width: 0;
    border: 1px solid #a5a5aa;
    border-width: 1px 1px 0 0;
    padding: 0 2px;
}

.search-field {
    display: flex;
    align-items: center;
    gap: 4px;
    border-color: #7a7a7a;
    padding: 0 0 0 5px;
}

.search-field select {
    flex: 1;
    height: 20px;
}

/* box with a data table and its scrollbars */
.gridbox {
    flex: none;
    display: grid;
    grid-template-columns: minmax(0, 1fr) 16px;
    grid-template-rows: 24px minmax(0, 1fr) 16px;
    padding: 1px;
    border: 1px solid #828790;
    background: #fff;
}

.gridbox-data {
    grid-area: 1 / 1 / 3 / 3;
    overflow: hidden;
}

.vscroll {
    grid-area: 2 / 2;
    display: flex;
    flex-direction: column;
    background: #f0f0f0;
}

.vscroll .track {
    flex: 1;
    display: flex;
    align-items: center;
}

.vscroll .thumb {
    width: 100%;
    height: 33%;
    min-height: 17px;
    background: #cdcdcd;
}

.vscroll button {
    height: 17px;
}

.hscroll {
    grid-area: 3 / 1;
    display: flex;
    background: #f0f0f0;
}

.hscroll button {
    width: 17px;
    color: #505050;
}

.hscroll button:disabled {
    color: #bfbfbf;
}

.hscroll .track {
    flex: 1;
}

.hscroll .thumb {
    height: 15px;
    background: #cdcdcd;
}

.to-end {
    grid-area: 3 / 2;
    background: #f0f0f0;
}

.vscroll svg,
.hscroll svg,
.to-end svg {
    width: 16px;
    height: 16px;
    flex: none;
}

.data {
    width: 100%;
    table-layout: fixed;
    border-collapse: separate;
    border-spacing: 0;
}

.data.lists {
    width: 1418px;
}

.data th {
    height: 24px;
    padding: 0 5px 0 6px;
    border-right: 1px solid #e5e5e5;
    font-weight: normal;
    text-align: left;
}

.data th:first-child {
    padding: 0 1px;
    border: none;
}

.data th.last {
    padding-right: 12px;
    border: none;
}

.data th.only {
    border: none;
}

.data td {
    height: 21px;
    padding: 0 3px;
    border-right: 1px solid #f0f0f0;
    border-bottom: 1px solid #f0f0f0;
    line-height: 20px;
    overflow: hidden;
}

.data td:first-child {
    border-color: transparent;
}

.data .num {
    text-align: right;
}

.data .icon {
    margin-right: 3px;
    vertical-align: middle;
}

.data .selected td {
    background: #e6e6e6;
}

.data .selected td:first-child {
    background: #dadada;
}

.data .bold td {
    font-weight: bold;
}

.dark td {
    border-right-color: #808080;
}

.blue td {
    border-right-color: #7f95b5;
}

.blue td:nth-child(4) ~ td,
.data td.mark {
    border-right-color: #7f95b5;
}

.dark td.lt,
.blue td.lt,
.data.blue td:last-child {
    border-right-color: #e8e8e8;
}

.data.dark .selected td.name,
.dark td.name {
    background: #ffffe1;
    color: #000080;
    font-weight: bold;
}

.data .selected td.focus {
    background: #f8f8f8;
    box-shadow: inset 0 0 0 1px #a0a0a0;
}

.data.dark .selected td.focus {
    background: #f8f8e6;
}

.data td.supplier {
    background: #008000;
    color: #fff;
}

.data .selected td.supplier {
    background: #358c35;
}

.data .selected td.over {
    background: #e27863;
}

.sort {
    width: 18px;
    height: 22px;
    background: #e1e1e1;
    border: 1px solid #adadad;
}

.sort svg {
    width: 14px;
    height: 16px;
    flex: none;
}

.sorted {
    position: relative;
}

.caret {
    position: absolute;
    top: 0;
    left: 49%;
    width: 8px;
    height: 5px;
    fill: none;
    stroke: #666;
}

.w20 { width: 20px; }
.w21 { width: 21px; }
.w60 { width: 60px; }
.w67 { width: 67px; }
.w83 { width: 83px; }
.w84 { width: 84px; }
.w86 { width: 86px; }
.w91 { width: 91px; }
.w96 { width: 96px; }
.w108 { width: 108px; }
.w111 { width: 111px; }
.w128 { width: 128px; }
.w131 { width: 131px; }
.w138 { width: 138px; }
.w148 { width: 148px; }
.w156 { width: 156px; }
.w160 { width: 160px; }
.w161 { width: 161px; }
.w165 { width: 165px; }
.w240 { width: 240px; }
.w265 { width: 265px; }

.addresses {
    height: 113px;
}

/* record area */
.workspace {
    flex: 1;
    min-height: 0;
    display: flex;
    background: #f0f0f0;
    border-top: 8px solid #f0f0f0;
    box-shadow: inset 0 1px #a0a0a0, inset 1px 0 #a0a0a0, inset 0 -1px #a0a0a0;
}

.record {
    flex: 1;
    min-width: 0;
    display: flex;
    flex-direction: column;
    padding: 9px 0 3px 3px;
}

.record-title {
    margin: 0 5px 0 6px;
    padding: 0 9px;
    height: 26px;
    flex: none;
    border: 1px solid #7a7a7a;
    box-shadow: inset 0 0 0 1px #fff;
    background: #f5deb3;
    font-size: 11px;
    line-height: 24px;
}

.tabs {
    display: flex;
    align-items: flex-end;
    height: 25px;
    flex: none;
    padding: 1px 0 0 1px;
}

.tabs button {
    height: 23px;
    padding: 0 4px;
    gap: 4px;
    border: 1px solid #d9d9d9;
    border-width: 1px 1px 0 0;
}

.tabs .active {
    height: 25px;
    margin-bottom: -1px;
    padding: 0 4px 4px;
    background: #fff;
    z-index: 1;
}

.tab-pane {
    flex: 1;
    min-height: 0;
    display: flex;
    background: #fff;
    border: 1px solid #dcdcdc;
    border-left: none;
}

.pane-content {
    flex: 1;
    min-width: 0;
    padding-left: 11px;
}

h2 {
    height: 17px;
    margin: 0;
    border-bottom: 1px solid #a0a0a0;
    color: #6d6d6d;
    font-size: 11px;
    line-height: 16px;
}

.pricelists {
    padding: 13px 0 0 4px;
}

.pricelists .gridbox {
    height: 146px;
    margin: 9px 0 8px;
}

.check {
    display: flex;
    align-items: center;
    gap: 3px;
}

.check input {
    appearance: none;
    width: 13px;
    height: 13px;
    border: 1px solid #333;
    background: #fff;
}

.check input:checked {
    background: url("data:image/svg+xml,%3Csvg xmlns='http://www.w3.org/2000/svg' viewBox='0 0 11 11'%3E%3Cpath d='M1.500 5.500l2.700 2.700 5.300-5.700' fill='none' stroke='%23222' stroke-width='1.200'/%3E%3C/svg%3E");
}

.pricelists .check {
    height: 14px;
    margin-bottom: 9px;
}

.prices {
    display: grid;
    grid-template-columns: 234px minmax(0, 1fr);
    margin-top: 8px;
}

.tree {
    height: 173px;
    margin: 0 0 7px 4px;
    padding: 1px 8px;
    border: 1px solid #828790;
    list-style: none;
}

.tree li {
    display: flex;
    align-items: center;
    gap: 5px;
    height: 18px;
}

.tree .child {
    gap: 0;
}

.expander {
    width: 16px;
    height: 16px;
    margin-left: -4px;
    color: #a0a0a0;
}

.current {
    display: flex;
    align-items: center;
    gap: 5px;
    height: 18px;
    padding: 0 4px 0 1px;
    background: #cce8ff;
}

.show-row {
    display: flex;
    align-items: center;
    justify-content: space-between;
    margin-bottom: 3px;
    padding-right: 3px;
}

.combo {
    height: 24px;
    padding: 0 4px;
    border: 1px solid #adadad;
    background-color: #e1e1e1;
}

.show-row .combo {
    width: 134px;
}

.filter .check {
    height: 26px;
}

.price-search {
    display: grid;
    grid-template-columns: 1fr 1fr;
    height: 22px;
    margin-left: 3px;
}

.price-search input {
    background: #f0f0f0;
    border: 1px solid #a0a4aa;
    border-bottom: none;
    box-shadow: inset 0 0 0 1px #b5cfe8;
}

.price-search select {
    border: 1px solid #7a7a7a;
    border-bottom: none;
}

.price-grid {
    height: 182px;
    margin-left: 3px;
}

/* lower groups */
.groups {
    display: flex;
    align-items: flex-start;
    margin-top: 16px;
}

.settings {
    width: 245px;
    margin-right: 25px;
}

.settings h2 {
    margin-bottom: 7px;
}

.form-row {
    display: flex;
    align-items: center;
    margin-bottom: 5px;
}

.form-row label,
.payment label {
    width: 150px;
}

.form-row .combo,
.form-row input {
    width: 88px;
}

.form-row input,
.payment input {
    height: 26px;
    border: 1px solid #7a7a7a;
}

.form-row input {
    padding: 0 1px 3px;
    text-align: right;
}

.branches {
    width: 220px;
    margin-right: 40px;
}

.branches .gridbox {
    height: 125px;
    margin-top: 7px;
}

.agreements {
    width: 337px;
}

.text-row {
    display: flex;
    align-items: flex-start;
    margin-top: 11px;
}

.text-row label {
    width: 85px;
    padding-left: 4px;
}

textarea {
    width: 224px;
    height: 48px;
    border: 1px solid #7a7a7a;
    resize: none;
}

.edit {
    margin: 5px 0 0 6px;
}

.payment {
    display: flex;
    align-items: center;
    margin-top: 12px;
}

.payment input {
    width: 691px;
}

.payment .edit {
    margin-top: 0;
}

/* icon column beside the form */
.actions {
    width: 45px;
    flex: none;
    display: flex;
    flex-direction: column;
    align-items: center;
    gap: 14px;
    padding: 15px 3px 0 0;
}

.sidebar {
    width: 107px;
    flex: none;
    margin: 2px 1px 2px 0;
    padding-top: 2px;
    border-left: 1px solid #a0a0a0;
    box-shadow: inset 0 1px #a0a0a0;
}

.sidebar button {
    width: 100%;
    height: 22px;
    padding: 0 2px 0 4px;
}

.sidebar span {
    flex: 1;
}

/* open windows and status */
.windows {
    height: 26px;
    flex: none;
    display: flex;
    align-items: center;
    padding-left: 1px;
    border-bottom: 2px solid #dcdcdc;
}

.windows button {
    width: 120px;
    height: 22px;
    gap: 4px;
    padding-left: 4px;
    justify-content: flex-start;
    border: 1px solid transparent;
}

.windows .on {
    background: #cce8ff;
    border-color: #90c8f6;
}

.statusbar {
    height: 23px;
    flex: none;
    display: flex;
    background: #f0f0f0;
    padding: 1px 0;
    line-height: 22px;
}

.statusbar span {
    border-right: 1px solid #d7d7d7;
    text-align: center;
}

.s20 { width: 20px; }
.s50 { width: 50px; }

.s30 {
    width: 30px;
    padding-left: 2px;
}

.statusbar .client {
    width: 250px;
    padding-left: 4px;
    text-align: left;
}
```
